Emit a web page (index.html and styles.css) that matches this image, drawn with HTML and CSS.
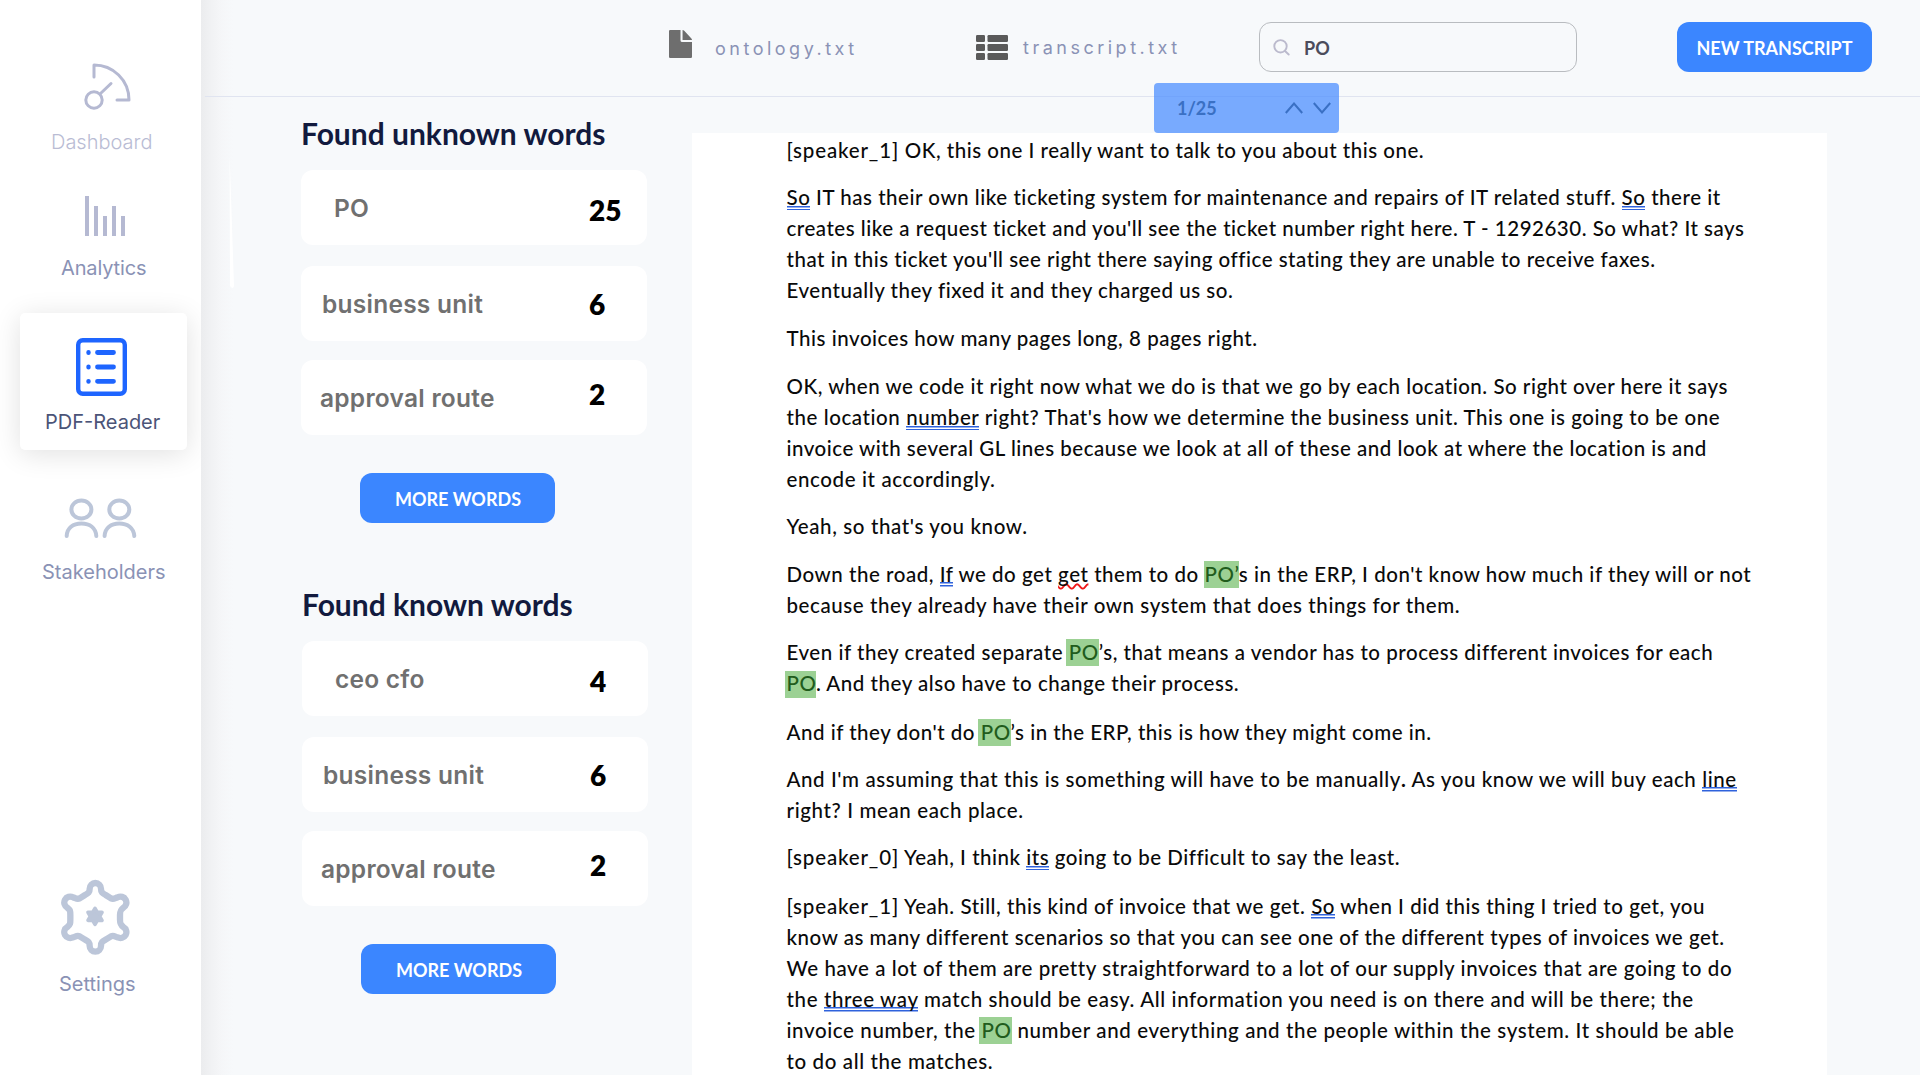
FILE: index.html
```html
<!DOCTYPE html>
<html lang="en">
<head>
<meta charset="utf-8">
<title>PDF-Reader</title>
<link rel="stylesheet" href="styles.css">
</head>
<body>
<nav class="sidebar">
  <a class="nav-item nav-dashboard">
    <svg width="48" height="48" viewBox="0 0 48 48" fill="none" stroke="#b5b9d2" stroke-width="3" stroke-linecap="round" stroke-linejoin="round"><path d="M10 15V3C29 3 45 18 45 38H33M16.500 31.500L27 21.500"/><circle cx="10" cy="38" r="8.200"/></svg>
    <span class="nav-label">Dashboard</span>
  </a>
  <a class="nav-item nav-analytics">
    <svg width="40" height="40" viewBox="0 0 40 40" fill="#b5b9d2"><path d="M0 0h4v40H0zM9 10h4v30H9zM18 20h4v20h-4zM27 10h4v30h-4zM36 20h4v20h-4z"/></svg>
    <span class="nav-label">Analytics</span>
  </a>
  <a class="nav-item nav-reader">
    <svg width="51" height="58" viewBox="0 0 51 58" fill="none" stroke="#1e65ff" stroke-linecap="round"><rect x="2.200" y="2.200" width="46.600" height="53.600" rx="4.500" stroke-width="4.400"/><path d="M21.500 14.500h16M21.500 29h16M21.500 43.300h16" stroke-width="4.800"/><path d="M12.500 14.300v.4M12.500 28.800v.4M12.500 43.100v.4" stroke-width="4.400"/></svg>
    <span class="nav-label">PDF-Reader</span>
  </a>
  <a class="nav-item nav-stakeholders">
    <svg width="73" height="41" viewBox="0 0 73 41" fill="none" stroke="#bcc6d9" stroke-width="4" stroke-linecap="round"><ellipse cx="17.400" cy="11.500" rx="10" ry="9"/><path d="M2.700 38C3 30 9 25.500 17.400 25.500S31.800 30 32.300 38"/><ellipse cx="55.300" cy="11.500" rx="10" ry="9"/><path d="M40.600 38C41 30 47 25.500 55.300 25.500S69.700 30 70.300 38"/></svg>
    <span class="nav-label">Stakeholders</span>
  </a>
  <a class="nav-item nav-settings">
    <svg width="70" height="78" viewBox="181 84 210 234" fill="none" stroke="#bcc6d9" stroke-linejoin="round"><path stroke-width="19" d="M270 116A17 17 0 0 1 304 116C304 127 308 130 318 135L334 145C342 149 346 144 354 142A17 17 0 0 1 371 173C362 180 361 184 361 195V209C361 220 362 224 371 231A17 17 0 0 1 354 262C346 260 342 255 334 259L318 269C308 274 304 277 304 288A17 17 0 0 1 270 288C270 277 266 274 256 269L240 259C232 255 228 260 220 262A17 17 0 0 1 203 231C212 224 212 220 212 209V195C212 184 212 180 203 173A17 17 0 0 1 220 142C228 144 232 149 240 145L256 135C266 130 270 127 270 116Z"/><path fill="#bcc6d9" stroke-width="11" d="M286 175L293 187H307L300 199L307 211H293L286 223L279 211H265L272 199L265 187H279Z"/></svg>
    <span class="nav-label">Settings</span>
  </a>
</nav>

<main class="main">
  <svg class="sliver" width="6" height="135" viewBox="0 0 6 135"><path fill="#fff" d="M.6 0L5 132Q4 136 1 132Z"/></svg>
  <header class="topbar">
    <a class="file file-ontology">
      <svg width="19" height="28" viewBox="0 0 19 28" preserveAspectRatio="none" fill="#6e6e6e"><path d="M1 0H9.500V10.500Q9.500 12 11 12H19V27Q19 28 18 28H1Q0 28 0 27V1Q0 0 1 0ZM11.200 0Q12 0 12.600.7L18.500 8.500Q19 9 19 10H11.200Z"/></svg>
      <span>ontology.txt</span>
    </a>
    <a class="file file-transcript">
      <svg width="32" height="25" viewBox="0 0 32 25" fill="#5a5a5a"><rect width="9" height="7" rx="1.200"/><rect x="11.500" width="20.500" height="7" rx="1.200"/><rect y="9" width="9" height="7" rx="1.200"/><rect x="11.500" y="9" width="20.500" height="7" rx="1.200"/><rect y="18" width="9" height="7" rx="1.200"/><rect x="11.500" y="18" width="20.500" height="7" rx="1.200"/></svg>
      <span>transcript.txt</span>
    </a>
    <div class="search">
      <svg width="17" height="17" viewBox="0 0 17 17" fill="none" stroke="#bbbacd" stroke-width="1.900" stroke-linecap="round"><circle cx="7.500" cy="7.300" r="6.200"/><path d="M12 12l3.700 3.500"/></svg>
      <span>PO</span>
    </div>
    <button class="btn btn-new">NEW TRANSCRIPT</button>
    <div class="matches">
      <span>1/25</span>
      <svg width="46" height="12" viewBox="0 0 46 12" fill="none" stroke="#3a70c4" stroke-width="2"><path d="M.8 11L9 1.500L17.200 11M28.800 1L37 10.500L45.200 1"/></svg>
    </div>
  </header>

  <div class="content">
    <aside class="words">
      <section class="group">
        <h2>Found unknown words</h2>
        <div class="word first"><span>PO</span><b>25</b></div>
        <div class="word second"><span>business unit</span><b>6</b></div>
        <div class="word third"><span>approval route</span><b>2</b></div>
        <button class="btn btn-more">MORE WORDS</button>
      </section>
      <section class="group known">
        <h2>Found known words</h2>
        <div class="word first"><span>ceo cfo</span><b>4</b></div>
        <div class="word second"><span>business unit</span><b>6</b></div>
        <div class="word third"><span>approval route</span><b>2</b></div>
        <button class="btn btn-more">MORE WORDS</button>
      </section>
    </aside>

    <article class="document">
      <p><span class="ln a"><span class="tag">[speaker_1]</span> OK, this one I really want to talk to you about this one.</span></p>
      <p><span class="ln b"><u>So</u> IT has their own like ticketing system for maintenance and repairs of IT related stuff. <u>So</u> there it</span>
        <span class="ln a">creates like a request ticket and you'll see the ticket number right here. T - 1292630. So what? It says</span>
        <span class="ln a">that in this ticket you'll see right there saying office stating they are unable to receive faxes.</span>
        <span class="ln b">Eventually they fixed it and they charged us so.</span></p>
      <p><span class="ln b">This invoices how many pages long, 8 pages right.</span></p>
      <p class="wide"><span class="ln a">OK, when we code it right now what we do is that we go by each location. So right over here it says</span>
        <span class="ln c">the location <u>number</u> right? That's how we determine the business unit. This one is going to be one</span>
        <span class="ln a">invoice with several GL lines because we look at all of these and look at where the location is and</span>
        <span class="ln d">encode it accordingly.</span></p>
      <p><span class="ln d">Yeah, so that's you know.</span></p>
      <p><span class="ln b">Down the road, <u>If</u> we do get <i class="typo">get</i> them to do <mark>PO’</mark>s in the ERP, I don't know how much if they will or not</span>
        <span class="ln c">because they already have their own system that does things for them.</span></p>
      <p><span class="ln b">Even if they created separate <mark class="pad">PO</mark>’s, that means a vendor has to process different invoices for each</span>
        <span class="ln b"><mark class="pad low">PO</mark>. And they also have to change their process.</span></p>
      <p class="wide"><span class="ln a">And if they don't do <mark class="pad">PO</mark>’s in the ERP, this is how they might come in.</span></p>
      <p><span class="ln c">And I'm assuming that this is something will have to be manually<b>.</b> As you know we will buy each <u>line</u></span>
        <span class="ln d">right? I mean each place.</span></p>
      <p><span class="ln a"><span class="tag">[speaker_0]</span> Yeah, I think <u>its</u> going to be Difficult to say the least.</span></p>
      <p class="wide"><span class="ln b"><span class="tag">[speaker_1]</span> Yeah. Still, this kind of invoice that we get. <u>So</u> when I did this thing I tried to get, you</span>
        <span class="ln b">know as many different scenarios so that you can see one of the different types of invoices we get.</span>
        <span class="ln c">We have a lot of them are pretty straightforward to a lot of our supply invoices that are going to do</span>
        <span class="ln d">the <u>three way</u> match should be easy. All information you need is on there and will be there; the</span>
        <span class="ln d">invoice number, the <mark class="pad">PO</mark> number and everything and the people within the system. It should be able</span>
        <span class="ln d">to do all the matches.</span></p>
    </article>
  </div>
</main>
</body>
</html>
```
FILE: styles.css
```css
* { box-sizing: border-box; }

body {
  margin: 0;
  display: flex;
  height: 1075px;
  overflow: hidden;
  background: #f7f9fb;
  font-family: Lato, "Liberation Sans", sans-serif;
}

svg { display: block; flex: none; }

/* Sidebar */
.sidebar {
  flex: none;
  width: 201px;
  padding-left: 20px;
  background: #fff;
}

.nav-item {
  display: flex;
  flex-direction: column;
  align-items: flex-start;
}

.nav-label {
  font: 400 20px/24px Inter, sans-serif;
  color: #8a92b5;
  white-space: nowrap;
}

.nav-dashboard { padding: 62px 0 0 64px; }
.nav-dashboard .nav-label { margin: 20px 0 0 -33px; color: #b9bcd4; font-weight: 350; }

.nav-analytics { padding: 42px 0 0 65px; }
.nav-analytics .nav-label { margin: 20px 0 0 -24px; letter-spacing: -.15px; }

.nav-reader {
  width: 167px;
  height: 137px;
  margin-top: 33px;
  padding: 25px 0 0 56px;
  border-radius: 5px;
  background: #fff;
  box-shadow: 0 4px 28px rgba(0, 0, 0, .12);
}
.nav-reader .nav-label { margin: 14px 0 0 -31px; color: #4b5478; }

.nav-stakeholders { padding: 48px 0 0 44px; }
.nav-stakeholders .nav-label { margin: 21px 0 0 -22px; }

.nav-settings { padding: 294px 0 0 40px; }
.nav-settings .nav-label { margin: 16px 0 0 -1px; }

/* Main area */
.main {
  position: relative;
  flex: 1;
  min-width: 0;
  background: linear-gradient(90deg, #ebecee 0, #f0f1f3 9px, #f5f6f8 20px, rgba(247, 249, 251, 0) 32px);
}

.sliver { position: absolute; left: 28px; top: 154px; }

.topbar {
  position: relative;
  display: flex;
  align-items: flex-start;
  height: 97px;
  margin-left: 4px;
  border-bottom: 1px solid #e0e4f0;
}

.file {
  display: flex;
  font: 400 18px/22px Inter, sans-serif;
  letter-spacing: 3.500px;
  color: #8a92b5;
  white-space: nowrap;
}

.file-ontology { width: 307px; margin: 30px 0 0 464px; }
.file-ontology svg { width: 23px; }
.file-ontology span { margin: 8px 0 0 23px; }

.file-transcript { width: 283px; margin-top: 35px; }
.file-transcript span { margin: 2px 0 0 15px; }

.search {
  display: flex;
  align-items: center;
  gap: 14px;
  width: 318px;
  height: 50px;
  margin-top: 22px;
  padding: 1px 13px 0;
  border: 1px solid #b9bcc0;
  border-radius: 12px;
  color: #4c4c5c;
  font-size: 18px;
  font-weight: 700;
}

.btn {
  height: 50px;
  padding: 1px 0 0;
  border: 0;
  border-radius: 12px;
  background: #3b86ff;
  color: #fff;
  font: 700 18px/22px Lato, "Liberation Sans", sans-serif;
  white-space: nowrap;
}

.btn-new { width: 195px; margin: 22px 0 0 100px; letter-spacing: -.02px; }
.btn-more { display: block; width: 195px; margin: 38px 0 0 59px; padding-left: 1px; }

.matches {
  position: absolute;
  z-index: 2;
  left: 949px;
  top: 83px;
  display: flex;
  align-items: center;
  justify-content: space-between;
  width: 185px;
  height: 50px;
  padding: 0 8px 0 23px;
  border-radius: 4px;
  background: rgba(75, 141, 255, .74);
  color: #3a70c4;
  font-size: 18px;
  font-weight: 700;
}

.content {
  display: flex;
  height: 978px;
}

/* Word lists */
.words {
  flex: none;
  width: 491px;
  padding: 18px 0 0 100px;
}

.known { margin: 63px 0 0 1px; }

h2 {
  margin: 0 0 19px;
  color: #121a3e;
  font-size: 30px;
  font-weight: 700;
  line-height: 36px;
  white-space: nowrap;
}

.word {
  display: flex;
  align-items: flex-start;
  width: 346px;
  height: 75px;
  border-radius: 12px;
  background: #fff;
  line-height: 75px;
}

.word span {
  flex: none;
  color: #707070;
  font-family: Inter, sans-serif;
  font-size: 24.500px;
  font-weight: 600;
  letter-spacing: .25px;
  width: 255px;
  margin: 1px 0 0 33px;
}

.word b { font-size: 28px; font-weight: 800; }

.first b { margin-top: 3px; }
.second { margin-top: 21px; }
.second span { width: 267px; margin-left: 21px; }
.second b { margin-top: 1px; }
.third { margin-top: 19px; }
.third span { width: 269px; margin-left: 19px; }
.third b { margin-top: -3px; }

/* Transcript */
.document {
  width: 1135px;
  margin-top: 36px;
  padding: 2px 0 0 94.500px;
  overflow: hidden;
  background: #fff;
  color: #0a0a0a;
  font-size: 20.500px;
  font-weight: 500;
  line-height: 31px;
}

.document p { margin: 0 0 16.300px; }
.document p.wide { margin-top: 17.600px; }

.ln { display: block; white-space: nowrap; }
.a { letter-spacing: .510px; }
.b { letter-spacing: .535px; }
.c { letter-spacing: .580px; }
.d { letter-spacing: .620px; }

.tag { letter-spacing: .850px; }

u {
  text-decoration: none;
  padding-bottom: 1px;
  background:
    linear-gradient(#2f62dc, #2f62dc) 0 calc(100% - 3px) / 100% 1.500px no-repeat,
    linear-gradient(#2f62dc, #2f62dc) 0 100% / 100% 1.500px no-repeat;
}

.typo {
  font-style: normal;
  text-decoration: underline wavy #f01818 1.500px;
  text-decoration-skip-ink: none;
  text-underline-offset: 1px;
}

mark {
  padding: 1px 0 2px;
  background: #9cd194;
  color: #215c1c;
}

mark.pad { margin-left: -3px; padding-left: 3px; }
mark.low { margin-left: -2px; padding: 0 0 3px 2px; }
```
